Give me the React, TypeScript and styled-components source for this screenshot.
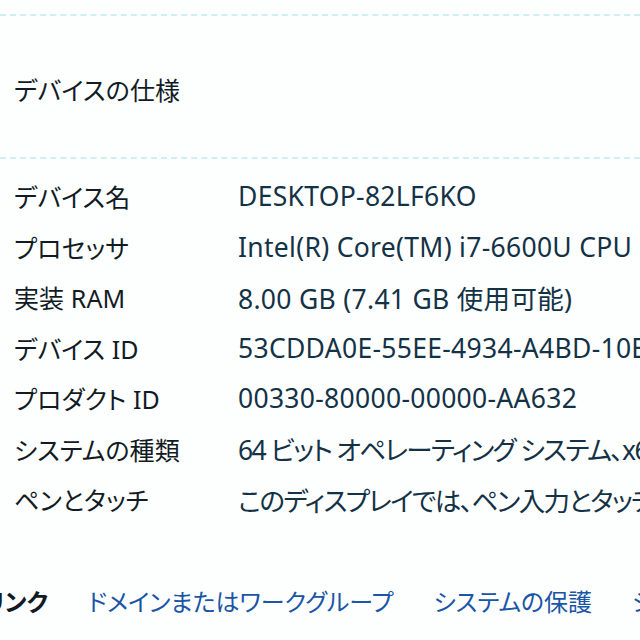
import React from "react";
import styled, { createGlobalStyle } from "styled-components";

const Global = createGlobalStyle`
  html, body { margin: 0; padding: 0; background: #ffffff; }
  body {
    width: 640px; height: 640px; overflow: hidden;
    font-family: "Noto Sans", "Noto Sans CJK JP", sans-serif;
    font-feature-settings: "palt";
  }
`;

const Page = styled.div`
  width: 640px;
  height: 640px;
  overflow: hidden;
  background: #fdfefe;
  display: flex;
  flex-direction: column;
`;

const Rule = styled.div<{ $top: number }>`
  margin-top: ${(p) => p.$top}px;
  height: 0;
  border-top: 2px dashed #cdeff5;
`;

const Header = styled.h1`
  margin: 0;
  height: 141px;
  box-sizing: border-box;
  padding-left: 14px;
  display: flex;
  align-items: center;
  padding-top: 4px;
  font-size: 25px;
  font-weight: 400;
  color: #121c26;
  letter-spacing: 0.2px;
`;

const Specs = styled.dl`
  margin: 12px 0 0 0;
  padding-left: 14px;
  display: grid;
  grid-template-columns: 224px 1fr;
  grid-auto-rows: 50.5px;
  align-items: center;
`;

const Label = styled.dt`
  font-size: 25px;
  color: #121b24;
  white-space: nowrap;
  letter-spacing: 0.1px;
`;

const Value = styled.dd<{ $tight?: boolean }>`
  margin: 0;
  font-size: 26.5px;
  color: #143246;
  white-space: nowrap;
  overflow: hidden;
  letter-spacing: ${(p) => (p.$tight ? "-1.6px" : "0.3px")};
`;

const Links = styled.nav`
  margin-top: 58px;
  margin-left: -64px;
  display: flex;
  gap: 40px;
  white-space: nowrap;
  align-items: center;
`;

const LinkHeading = styled.span`
  font-size: 24px;
  font-weight: 600;
  color: #121b24;
`;

const LinkItem = styled.a`
  font-size: 24px;
  color: #1a55a6;
  text-decoration: none;
`;

const specs: [string, string, boolean][] = [
  ["デバイス名", "DESKTOP-82LF6KO", false],
  ["プロセッサ", "Intel(R) Core(TM) i7-6600U CPU @ 2.60GHz", false],
  ["実装 RAM", "8.00 GB (7.41 GB 使用可能)", false],
  ["デバイス ID", "53CDDA0E-55EE-4934-A4BD-10E2C6F1A7B3", false],
  ["プロダクト ID", "00330-80000-00000-AA632", false],
  ["システムの種類", "64 ビット オペレーティング システム、x64 ベース プロセッサ", true],
  ["ペンとタッチ", "このディスプレイでは、ペン入力とタッチ入力は利用できません", true],
];

export default function App() {
  return (
    <>
      <Global />
      <Page>
        <Rule $top={14} />
        <Header>デバイスの仕様</Header>
        <Rule $top={0} />
        <Specs>
          {specs.map(([k, v, tight]) => (
            <React.Fragment key={k}>
              <Label>{k}</Label>
              <Value $tight={tight}>{v}</Value>
            </React.Fragment>
          ))}
        </Specs>
        <Links>
          <LinkHeading>関連リンク</LinkHeading>
          <LinkItem href="#">ドメインまたはワークグループ</LinkItem>
          <LinkItem href="#">システムの保護</LinkItem>
          <LinkItem href="#">システムの詳細設定</LinkItem>
        </Links>
      </Page>
    </>
  );
}
